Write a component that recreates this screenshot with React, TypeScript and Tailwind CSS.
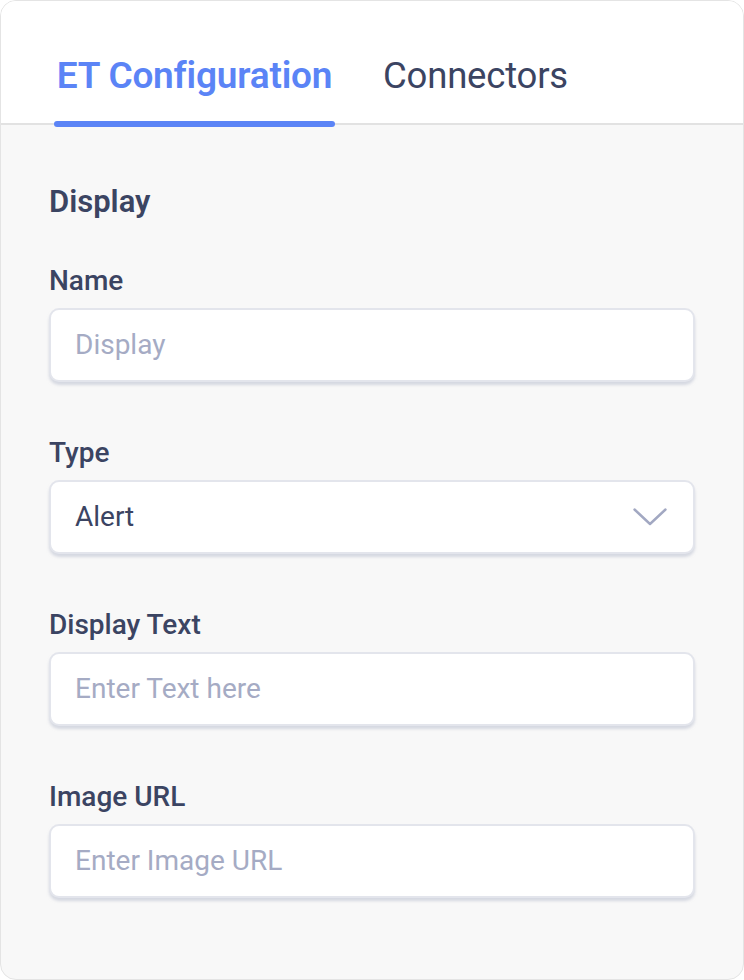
import React from "react";

function Field({ label, placeholder, value, select }: { label: string; placeholder?: string; value?: string; select?: boolean }) {
  return (
    <div className="flex flex-col">
      <div className="text-[28px] leading-[36px] font-medium text-[#3b4462]">{label}</div>
      <div className="mt-[9px] h-[74px] rounded-[10px] border-2 border-[#e3e5ec] bg-white shadow-[0_3px_3px_rgba(190,195,210,0.6)] flex items-center pl-[24px] pr-[26px]">
        {value ? (
          <span className="flex-1 text-[28px] text-[#3b4462]">{value}</span>
        ) : (
          <span className="flex-1 text-[28px] text-[#a5abc4]">{placeholder}</span>
        )}
        {select && (
          <svg width="34" height="18" viewBox="0 0 34 18" fill="none">
            <path d="M1.5 1.5 L17 16 L32.5 1.5" stroke="#a2a8c2" strokeWidth="2.4" strokeLinecap="round" strokeLinejoin="round" />
          </svg>
        )}
      </div>
    </div>
  );
}

export default function App() {
  return (
    <div className="w-[744px] h-[980px] bg-white" style={{ fontFamily: "Roboto, 'Liberation Sans', sans-serif" }}>
      <div className="h-full rounded-[16px] border border-[#e4e4e4] overflow-hidden bg-[#f8f8f8] flex flex-col">
        <div className="relative h-[124px] bg-white border-b-2 border-[#e2e2e2] flex items-end pl-[53px]">
          <div className="relative w-[281px] h-full flex items-center justify-center">
            <span className="text-[37px] font-semibold text-[#5b84f6] tracking-[-0.2px] mt-[28px]">ET Configuration</span>
            <div className="absolute left-0 right-0 bottom-[-4px] h-[6px] rounded-full bg-[#5b84f6]" />
          </div>
          <div className="ml-[48px] h-full flex items-center">
            <span className="text-[36.5px] text-[#3b4462] tracking-[-0.2px] mt-[28px]">Connectors</span>
          </div>
        </div>
        <div className="px-[48px] flex flex-col">
          <div className="mt-[57px] text-[31px] leading-[40px] font-semibold text-[#3b4462]">Display</div>
          <div className="mt-[41px] flex flex-col gap-[53px]">
            <Field label="Name" placeholder="Display" />
            <Field label="Type" value="Alert" select />
            <Field label="Display Text" placeholder="Enter Text here" />
            <Field label="Image URL" placeholder="Enter Image URL" />
          </div>
        </div>
      </div>
    </div>
  );
}
